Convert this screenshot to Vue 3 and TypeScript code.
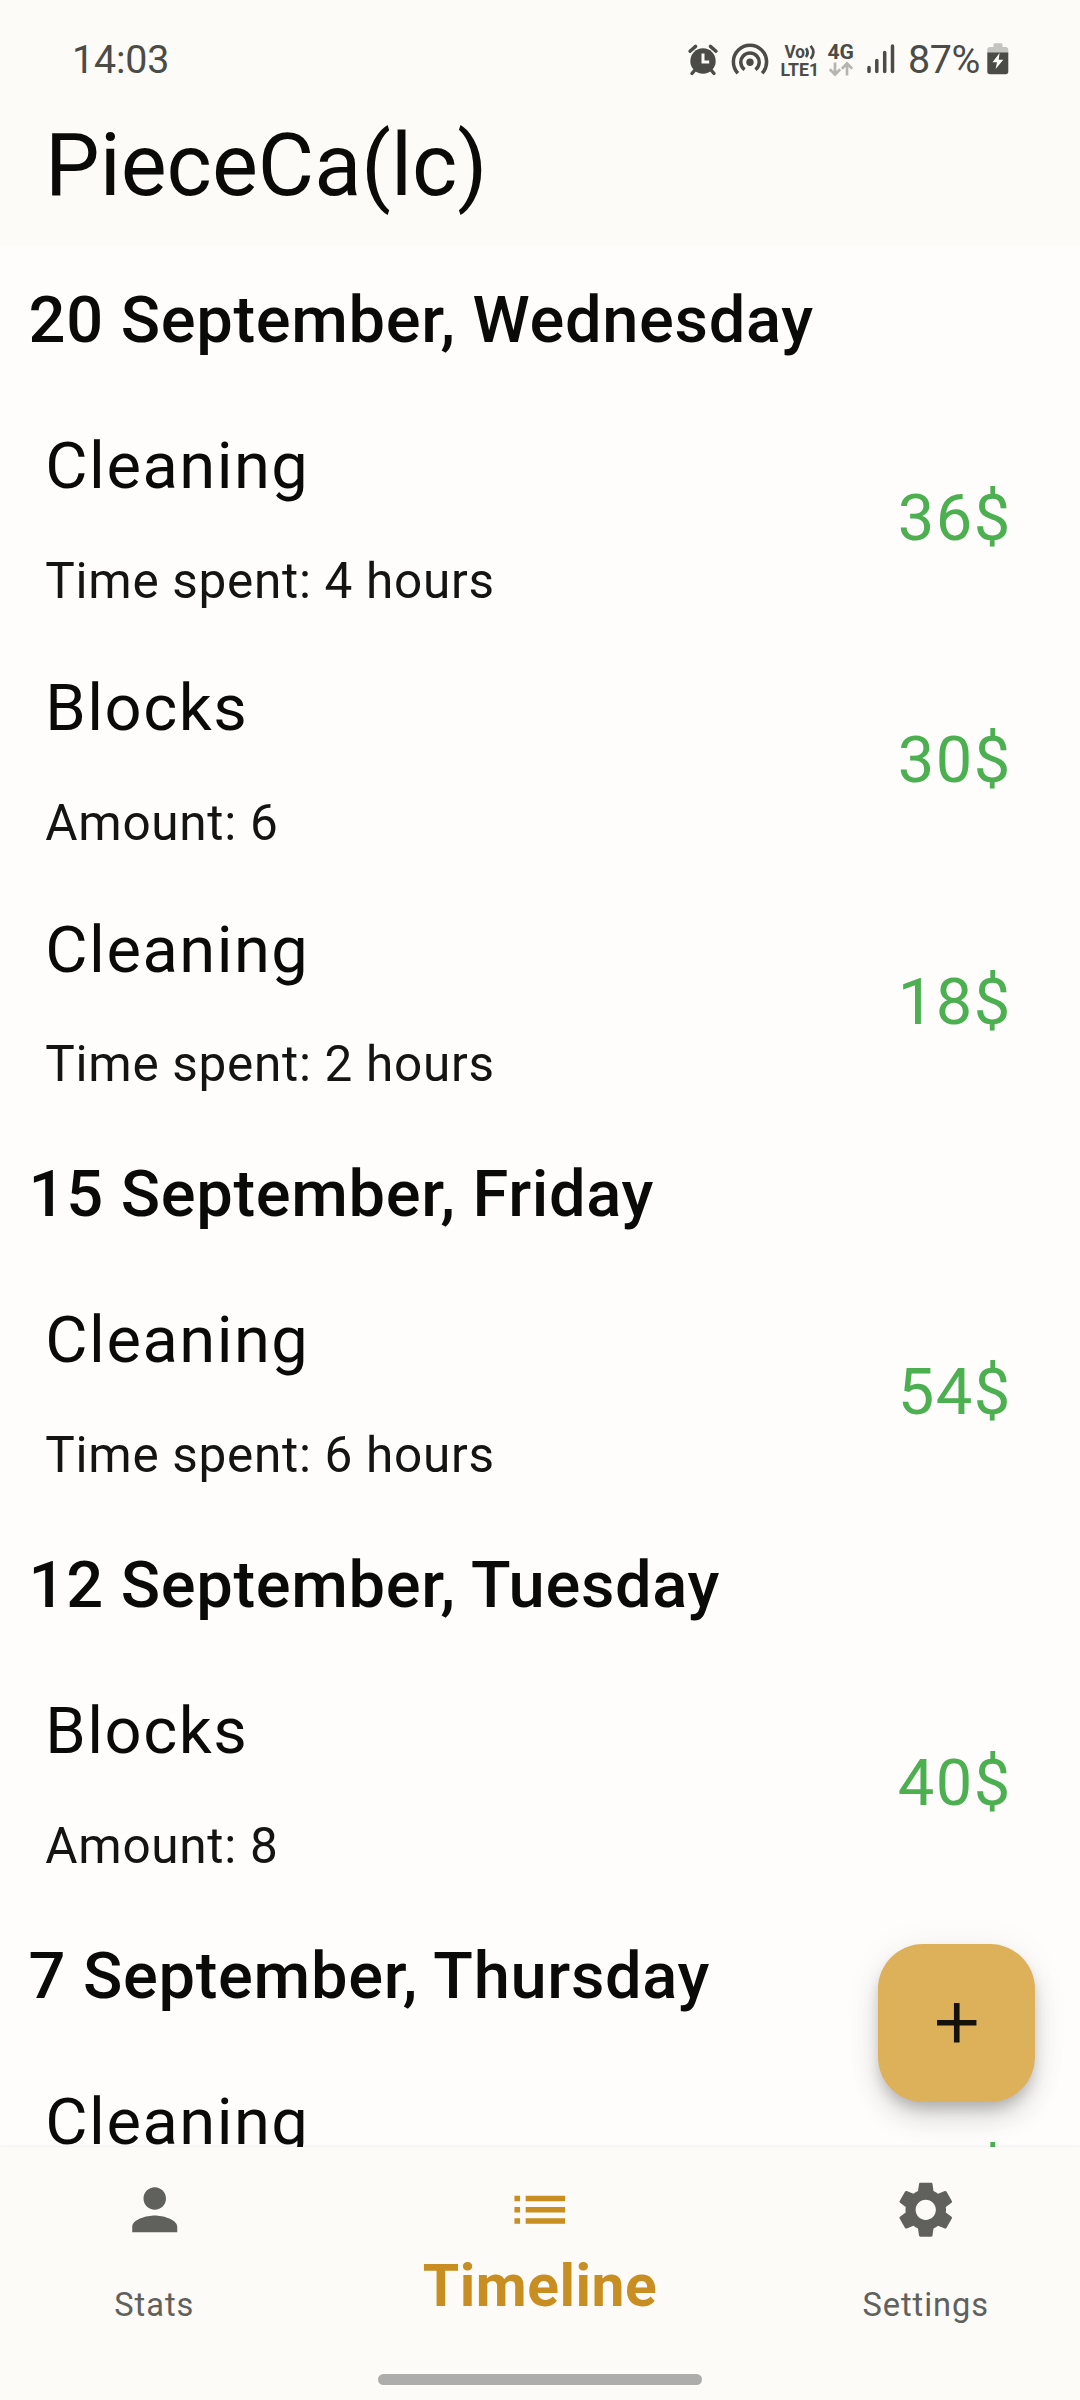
<script setup lang="ts">
interface Entry {
  name: string
  detail: string
  price: string
}
interface Day {
  date: string
  entries: Entry[]
}

const days: Day[] = [
  {
    date: '20 September, Wednesday',
    entries: [
      { name: 'Cleaning', detail: 'Time spent: 4 hours', price: '36$' },
      { name: 'Blocks', detail: 'Amount: 6', price: '30$' },
      { name: 'Cleaning', detail: 'Time spent: 2 hours', price: '18$' },
    ],
  },
  {
    date: '15 September, Friday',
    entries: [{ name: 'Cleaning', detail: 'Time spent: 6 hours', price: '54$' }],
  },
  {
    date: '12 September, Tuesday',
    entries: [{ name: 'Blocks', detail: 'Amount: 8', price: '40$' }],
  },
  {
    date: '7 September, Thursday',
    entries: [{ name: 'Cleaning', detail: 'Time spent: 4 hours', price: '36$' }],
  },
]
</script>

<template>
  <div class="screen">
    <header class="top">
      <div class="status">
        <span class="clock">14:03</span>
        <div class="indicators">
          <svg class="alarm" width="30" height="32" viewBox="0 0 30 32">
            <circle cx="15" cy="17" r="12.7" fill="currentColor" />
            <path d="M2 7.2 7.6 2.4M28 7.2 22.400 2.4M6.5 26.5 4 29.5M23.5 26.5 26 29.5" stroke="currentColor" stroke-width="3.4" stroke-linecap="round" fill="none" />
            <path d="M15 9.6V18h6.2" stroke="#fcfbf7" stroke-width="3" fill="none" />
          </svg>
          <svg class="hotspot" width="38" height="32" viewBox="0 0 38 32">
            <circle cx="19" cy="19.2" r="3.7" fill="currentColor" />
            <path d="M13.6 26.6A9.2 9.2 0 1 1 24.4 26.6M6.9 30.2A16.6 16.6 0 1 1 31.1 30.2" stroke="currentColor" stroke-width="3.5" fill="none" />
          </svg>
          <svg class="volte" width="38" height="34" viewBox="0 0 38 34">
            <text x="3.500" y="15.300" font-size="18" font-weight="700" textLength="20.500" lengthAdjust="spacingAndGlyphs">Vo</text>
            <path d="M25 5.200q3.200 4.200 0 8.800M29.600 2.800q5.600 6.400 0 13" stroke="currentColor" stroke-width="2.700" fill="none" />
            <text x="-0.500" y="32.700" font-size="18" font-weight="700" textLength="38.500" lengthAdjust="spacingAndGlyphs">LTE1</text>
          </svg>
          <svg class="data" width="26" height="34" viewBox="0 0 26 34">
            <text x="-0.500" y="15.600" font-size="19.500" font-weight="700" textLength="26.500" lengthAdjust="spacingAndGlyphs">4G</text>
            <path d="M7 19.500V31M1.800 26.300 7 31.500 12.200 26.300M19 32.500V21M13.800 25.700 19 20.500 24.200 25.700" stroke="#b5b5b2" stroke-width="2.700" fill="none" />
          </svg>
          <svg class="signal" width="28" height="30" viewBox="0 0 28 30">
            <path d="M2 23.500V27.600M9.800 16.500V27.600M17.700 8.500V27.600M25.500 2V27.600" stroke="currentColor" stroke-width="3.500" stroke-linecap="round" />
          </svg>
          <span class="percent">87%</span>
          <svg class="battery" width="22" height="32" viewBox="0 0 22 32">
            <path d="M6.500 4V1.500Q6.500.3 7.700.3H14.300Q15.500.3 15.500 1.500V4H18.500Q21.300 4 21.300 6.800V10H.3V6.800Q.3 4 3.100 4Z" fill="#c4c4c1" />
            <path d="M.3 9.500H21.300V28.500Q21.300 31.300 18.500 31.300H3.100Q.3 31.300.3 28.500Z" fill="currentColor" />
            <path d="M12.600 10 5.500 19.200H10L8.600 26 16.300 16.800H11.700Z" fill="#fcfbf7" />
          </svg>
        </div>
      </div>
      <h1 class="title">PieceCa(lc)</h1>
    </header>

    <main class="list">
      <section v-for="day in days" :key="day.date">
        <h2 class="date">{{ day.date }}</h2>
        <article v-for="(entry, i) in day.entries" :key="i" class="entry">
          <div class="info">
            <div class="name">{{ entry.name }}</div>
            <div class="detail">{{ entry.detail }}</div>
          </div>
          <div class="price">{{ entry.price }}</div>
        </article>
      </section>
    </main>

    <button class="fab" aria-label="Add">
      <svg width="67.5" height="67.5" viewBox="0 0 24 24"><path d="M19 13h-6v6h-2v-6H5v-2h6V5h2v6h6v2z" fill="#151209" /></svg>
    </button>

    <footer class="bottom">
      <nav class="tabs">
        <a class="tab">
          <svg viewBox="0 0 24 24"><path d="M12 12c2.210 0 4-1.790 4-4s-1.790-4-4-4-4 1.790-4 4 1.790 4 4 4zm0 2c-2.670 0-8 1.340-8 4v2h16v-2c0-2.660-5.330-4-8-4z" /></svg>
          <span>Stats</span>
        </a>
        <a class="tab active">
          <svg viewBox="0 0 24 24"><path d="M3 13h2v-2H3v2zm0 4h2v-2H3v2zm0-8h2V7H3v2zm4 4h14v-2H7v2zm0 4h14v-2H7v2zM7 7v2h14V7H7z" /></svg>
          <span>Timeline</span>
        </a>
        <a class="tab">
          <svg viewBox="0 0 24 24"><path d="M19.140 12.940c.04-.3.060-.610.060-.940 0-.32-.020-.640-.070-.940l2.030-1.580c.180-.140.230-.410.120-.610l-1.920-3.320c-.120-.220-.370-.290-.590-.220l-2.390.960c-.5-.380-1.030-.7-1.620-.940l-.360-2.540c-.040-.240-.240-.410-.480-.410h-3.840c-.240 0-.430.170-.470.410l-.360 2.540c-.590.240-1.130.570-1.620.940l-2.390-.960c-.220-.080-.470 0-.590.220L2.740 8.870c-.120.210-.080.470.120.610l2.030 1.580c-.050.300-.090.630-.090.940s.020.640.070.940l-2.030 1.580c-.180.140-.230.410-.120.610l1.920 3.320c.120.220.370.290.590.220l2.390-.960c.5.380 1.030.7 1.620.940l.360 2.540c.050.240.240.410.480.410h3.840c.240 0 .440-.170.470-.410l.360-2.540c.590-.240 1.130-.560 1.620-.940l2.390.960c.220.080.470 0 .590-.220l1.920-3.320c.120-.220.070-.470-.120-.610l-2.010-1.580zM12 15.600c-1.980 0-3.600-1.620-3.600-3.600s1.620-3.600 3.600-3.600 3.600 1.620 3.600 3.600-1.620 3.600-3.600 3.600z" /></svg>
          <span>Settings</span>
        </a>
      </nav>
      <div class="handle"></div>
    </footer>
  </div>
</template>

<style>
body {
  margin: 0;
}
</style>

<style scoped>
.screen {
  position: relative;
  display: flex;
  flex-direction: column;
  width: 1080px;
  height: 2400px;
  overflow: hidden;
  background: #fefdfc;
  color: #0a0a09;
  font-family: Roboto, 'Liberation Sans', sans-serif;
}
.top {
  flex: none;
  box-sizing: border-box;
  height: 246px;
  background: #fcfbf7;
}
.status {
  display: flex;
  justify-content: space-between;
  align-items: flex-start;
  box-sizing: border-box;
  height: 113px;
  padding: 36px 71px 0 72px;
  color: #4b4b48;
}
.clock,
.percent {
  padding-top: 1px;
  font-size: 39.4px;
  line-height: 46px;
}
.clock {
  letter-spacing: -0.2px;
}
.indicators {
  display: flex;
  align-items: flex-start;
}
.indicators svg {
  flex: none;
  overflow: visible;
}
.indicators text {
  fill: currentColor;
}
.alarm {
  margin-top: 8px;
}
.hotspot {
  margin: 7px 0 0 13px;
}
.volte {
  margin: 7px 0 0 12px;
}
.data {
  margin: 7px 0 0 9px;
}
.signal {
  margin: 8px 0 0 13.5px;
}
.percent {
  margin-left: 13px;
  letter-spacing: -0.4px;
}
.battery {
  margin: 7px 0 0 7px;
}
.title {
  margin: 0 0 0 45px;
  font-size: 86.6px;
  font-weight: 400;
  line-height: 106px;
}
.list {
  flex: none;
  height: 1900.7px;
  overflow: hidden;
}
.date {
  margin: 0;
  height: 149.2px;
  padding-left: 28.6px;
  box-sizing: border-box;
  font-size: 65px;
  font-weight: 500;
  line-height: 148px;
  letter-spacing: 0.68px;
}
.entry {
  display: flex;
  justify-content: space-between;
  align-items: center;
  box-sizing: border-box;
  height: 241.6px;
  padding: 0 67.5px 0 45.3px;
}
.info {
  padding-top: 6.4px;
}
.name,
.price {
  font-size: 65px;
  line-height: 76px;
  letter-spacing: 1.5px;
}
.name {
  margin-bottom: 47.6px;
}
.detail {
  color: #141412;
  font-size: 49.5px;
  line-height: 58px;
  letter-spacing: 0.7px;
}
.price {
  padding-top: 5px;
  margin-right: 0.6px;
  color: #4caf50;
}
.fab {
  position: absolute;
  right: 45px;
  top: 1944.2px;
  display: flex;
  align-items: center;
  justify-content: center;
  width: 157.5px;
  height: 157.5px;
  padding: 0;
  border: 0;
  border-radius: 45px;
  background: #ddb05a;
  box-shadow: 0 9px 14px -3px rgba(0, 0, 0, 0.2), 0 17px 28px rgba(0, 0, 0, 0.12), 0 3px 40px rgba(0, 0, 0, 0.05);
}
.bottom {
  position: relative;
  flex: 1;
  background: #fcfbf7;
  box-shadow: 0 0 3px rgba(0, 0, 0, 0.1);
}
.tabs {
  display: flex;
  height: 227.3px;
}
.tab {
  display: flex;
  flex: 2 1 0;
  flex-direction: column;
  align-items: center;
  color: #60605d;
}
.tab.active {
  flex: 3 1 0;
  color: #c98e22;
}
.tab svg {
  width: 67.5px;
  height: 67.5px;
  margin-top: 29.8px;
  fill: currentColor;
}
.tab span {
  margin-top: 42px;
  font-size: 32.6px;
  line-height: 38px;
  letter-spacing: 0.95px;
}
.tab.active span {
  margin-top: 8px;
  font-size: 58.8px;
  font-weight: 700;
  line-height: 68px;
  letter-spacing: 0.5px;
}
.handle {
  width: 324px;
  height: 11px;
  margin: 0 auto;
  border-radius: 6px;
  background: #adadab;
}
</style>
